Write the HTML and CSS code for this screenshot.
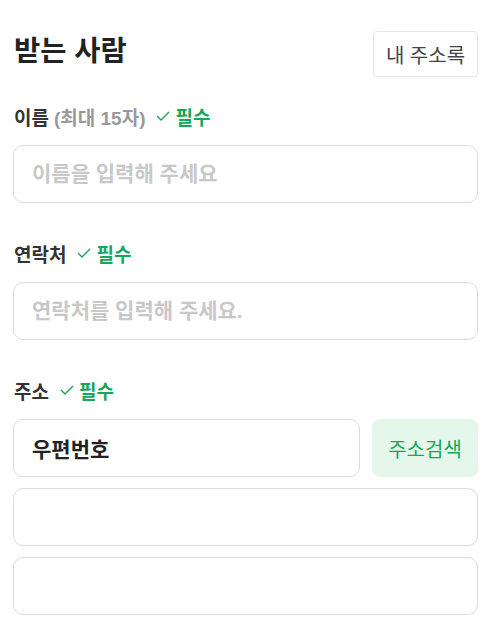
FILE: index.html
```html
<!DOCTYPE html>
<html lang="ko">
<head>
  <meta charset="UTF-8" />
  <title>받는 사람</title>
  <meta name="viewport" content="width=device-width, initial-scale=1.0">
  <link rel="stylesheet" href="styles.css">
</head>
<body>
  <div class="header">
    <h1>받는 사람</h1>
    <button class="book-btn">내 주소록</button>
  </div>

  <div class="field">
    <label class="label" for="name">
      이름 <span class="hint">(최대 15자)</span>
      <span class="required">
        <svg width="14" height="10" viewBox="0 0 14 10"><polyline points="1,5 5,9 13,1" fill="none" stroke="#16a75c" stroke-width="1.4"/></svg>
        필수
      </span>
    </label>
    <input id="name" class="input" type="text" placeholder="이름을 입력해 주세요">
  </div>

  <div class="field">
    <label class="label" for="phone">
      연락처
      <span class="required">
        <svg width="14" height="10" viewBox="0 0 14 10"><polyline points="1,5 5,9 13,1" fill="none" stroke="#16a75c" stroke-width="1.4"/></svg>
        필수
      </span>
    </label>
    <input id="phone" class="input" type="text" placeholder="연락처를 입력해 주세요.">
  </div>

  <div class="field">
    <label class="label" for="zip">
      주소
      <span class="required">
        <svg width="14" height="10" viewBox="0 0 14 10"><polyline points="1,5 5,9 13,1" fill="none" stroke="#16a75c" stroke-width="1.4"/></svg>
        필수
      </span>
    </label>
    <div class="address">
      <div class="zip-row">
        <input id="zip" class="input zip" type="text" value="우편번호" readonly>
        <button class="search-btn">주소검색</button>
      </div>
      <input class="input" type="text">
      <input class="input" type="text">
    </div>
  </div>
</body>
</html>
```

FILE: styles.css
```css
body {
  font-family: "Liberation Sans", "Noto Sans CJK KR", sans-serif;
  background: #fff;
  color: #333;
  margin: 0;
  padding: 31px 13px 0 13px;
}
.header {
  display: flex;
  justify-content: space-between;
  align-items: flex-start;
}
h1 {
  margin: 0 0 0 1px;
  font-size: 28.5px;
  line-height: 40px;
  font-weight: bold;
  color: #222;
}
.book-btn {
  width: 105px;
  height: 46px;
  background: #fff;
  border: 1px solid #e6e6e6;
  border-radius: 4px;
  font-family: inherit;
  font-size: 20px;
  color: #444;
  padding: 0;
}
.field {
  margin-top: 38px;
}
.header + .field {
  margin-top: 27px;
}
.label {
  display: flex;
  align-items: center;
  height: 24px;
  margin: 0 0 17px 1px;
  font-size: 19px;
  font-weight: bold;
  color: #333;
}
.hint {
  color: #999;
  margin-left: 5px;
}
.required {
  display: inline-flex;
  align-items: center;
  gap: 5px;
  margin-left: 11px;
  color: #16a75c;
}
.input {
  display: block;
  box-sizing: border-box;
  width: 100%;
  height: 58px;
  border: 1px solid #dcdcdc;
  border-radius: 10px;
  padding: 0 18px;
  font-family: inherit;
  font-size: 21px;
  font-weight: bold;
  color: #222;
  outline: none;
}
.input::placeholder {
  color: #c8c8c8;
}
.address {
  display: flex;
  flex-direction: column;
  gap: 11px;
}
.zip-row {
  display: flex;
  gap: 12px;
}
.zip {
  flex: 1;
}
.search-btn {
  width: 106px;
  height: 58px;
  border: none;
  border-radius: 8px;
  background: #e5f6ea;
  color: #16a75c;
  font-family: inherit;
  font-size: 20px;
  padding: 0;
}
```
